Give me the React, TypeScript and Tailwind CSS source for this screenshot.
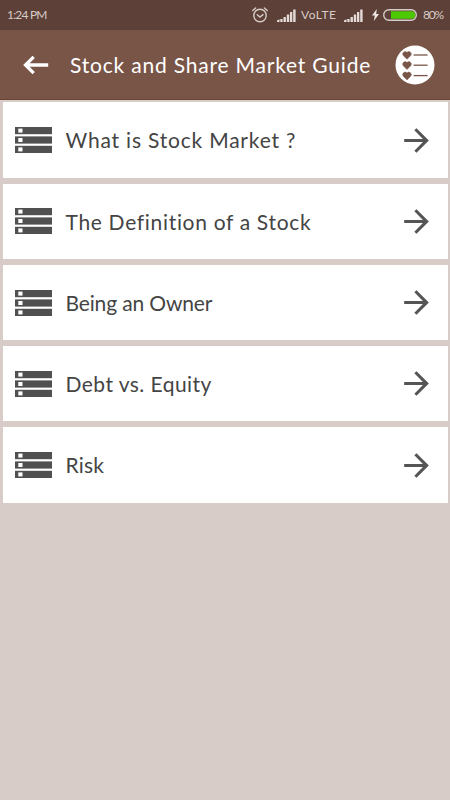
import clsx from 'clsx';

const topics = [
  { title: 'What is Stock Market ?', tracking: 'tracking-[0.8px]' },
  { title: 'The Definition of a Stock', tracking: 'tracking-[0.68px]' },
  { title: 'Being an Owner', tracking: 'tracking-[-0.15px]' },
  { title: 'Debt vs. Equity', tracking: 'tracking-[0.45px]' },
  { title: 'Risk', tracking: 'tracking-[0.2px]' },
];

const AlarmIcon = () => (
  <svg className="h-4 w-4 shrink-0" viewBox="0 0 16 16" fill="none" stroke="#d7ccc8" strokeWidth="1.4" strokeLinecap="round">
    <circle cx="8" cy="8.5" r="6.2" />
    <path d="M5.2 7.8 8 10l3-2.4" />
    <path d="M.8 3.6 3.6 1M15.2 3.6 12.4 1" />
  </svg>
);

const SignalIcon = () => (
  <svg className="h-[13px] w-[19px] shrink-0" viewBox="0 0 19 13" fill="#e4dad7">
    <path d="M0 11.5 2.5 10.3V13H0zM3.3 10H5.6v3H3.3zM6.5 8h2.4v5H6.5zM9.8 5.5h2.4V13H9.8zM13 3h2.3v10H13zM16.2.5h2.4V13h-2.4z" />
  </svg>
);

const BoltIcon = () => (
  <svg className="h-3 w-[7px] shrink-0" viewBox="0 0 7 12" fill="#efe7e4">
    <path d="M4.8 0 0 6.6h2.8L1.8 12 7 4.9H4.2z" />
  </svg>
);

const BatteryIcon = () => (
  <svg className="h-3 w-[34px] shrink-0" viewBox="0 0 34 12">
    <rect x=".7" y=".7" width="32.6" height="10.6" rx="5.3" fill="none" stroke="#d7ccc8" strokeWidth="1.4" />
    <path d="M8 2.2h20.5a3.8 3.8 0 0 1 0 7.6H8z" fill="#4bc800" />
  </svg>
);

const BackIcon = () => (
  <svg className="h-[20px] w-[26px]" viewBox="0 0 26 20" fill="none" stroke="#fff" strokeWidth="3.3">
    <path d="M2.5 10H25.2M10.7 1.8 2.5 10l8.2 8.2" />
  </svg>
);

const FavouritesIcon = () => (
  <svg className="h-10 w-10" viewBox="0 0 40 40">
    <circle cx="20" cy="20" r="19.5" fill="#fff" />
    {[10, 20.2, 30.6].map((y) => (
      <g key={y} transform={`translate(12 ${y})`}>
        <path d="M0 4.3 L-3.7 .6 A2.4 2.4 0 0 1 0 -2.6 A2.4 2.4 0 0 1 3.7 .6 Z" fill="#795548" stroke="#795548" strokeWidth=".5" />
        <path d="M6.6 0h14" stroke="#795548" strokeWidth="1.3" />
      </g>
    ))}
  </svg>
);

const StorageIcon = () => (
  <svg className="h-[26px] w-[37px] shrink-0" viewBox="0 0 37 26">
    {[0, 9.4, 18.8].map((y) => (
      <g key={y}>
        <rect y={y} width="37.3" height="7.2" fill="#505050" />
        <rect x="3.3" y={y + 1.6} width="4.2" height="4" fill="#fff" />
      </g>
    ))}
  </svg>
);

const ForwardIcon = () => (
  <svg className="h-[37px] w-[37px] shrink-0" viewBox="0 0 24 24" fill="#555">
    <path d="M12 4l-1.41 1.41L16.17 11H4v2h12.17l-5.58 5.59L12 20l8-8z" />
  </svg>
);

const App = () => {
  return (
    <div className="flex h-screen w-full flex-col overflow-hidden bg-[#d7ccc8] font-['Lato',sans-serif]">
      {/* Status bar */}
      <div className="flex h-[30px] shrink-0 items-center justify-between bg-[#5d4037] px-[7px] text-[12px] text-[#d7ccc8]">
        <span className="w-[40px] whitespace-nowrap tracking-[-0.8px]">1:24 PM</span>
        <div className="flex items-center">
          <AlarmIcon />
          <div className="ml-[9px] flex"><SignalIcon /></div>
          <span className="ml-[5px] w-[43px] whitespace-nowrap tracking-[0.5px]">VoLTE</span>
          <SignalIcon />
          <div className="ml-[9px] flex"><BoltIcon /></div>
          <div className="ml-1 flex"><BatteryIcon /></div>
          <span className="ml-[6px] w-[20px] whitespace-nowrap tracking-[-1.2px]">80%</span>
        </div>
      </div>

      {/* Toolbar */}
      <header className="flex h-[70px] shrink-0 items-center border-b border-[#6d4432] bg-[#795548] pr-[15px] pl-[22.5px]">
        <BackIcon />
        <h1 className="ml-[21.5px] flex-1 whitespace-nowrap text-[21px] tracking-[0.8px] text-white">Stock and Share Market Guide</h1>
        <FavouritesIcon />
      </header>

      {/* Topics */}
      <ul className="flex flex-col gap-[6px] px-[2.5px] pt-[2.4px]">
        {topics.map((topic) => (
          <li key={topic.title} className="flex h-[75.25px] items-center bg-white pr-[13px] pl-[12.5px]">
            <StorageIcon />
            <span className={clsx('ml-[13.5px] flex-1 whitespace-nowrap text-[21px] text-[#444]', topic.tracking)}>{topic.title}</span>
            <ForwardIcon />
          </li>
        ))}
      </ul>
    </div>
  );
};

export default App;
